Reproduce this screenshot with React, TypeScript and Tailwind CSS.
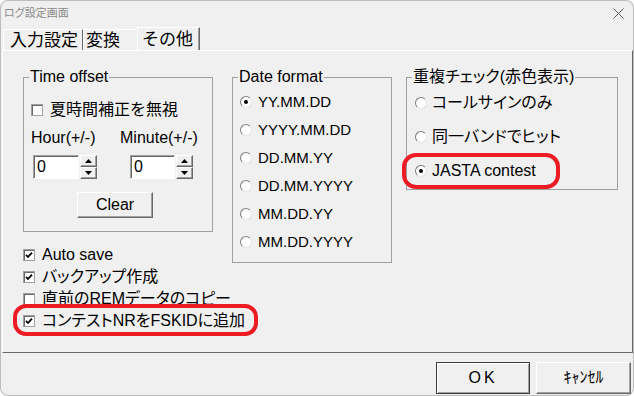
import React from "react";

const raised =
  "border border-white border-r-[#696969] border-b-[#696969] shadow-[inset_-1px_-1px_0_#a0a0a0]";

const CheckBox = ({ checked }: { checked?: boolean }) => (
  <span className="w-[12px] h-[12px] shrink-0 bg-white border border-[#a0a0a0] shadow-[inset_1px_1px_0_#696969] flex items-center justify-center">
    {checked && (
      <svg width="10" height="10" viewBox="0 0 10 10">
        <path d="M2 4.8 L4 7 L8 2.6" fill="none" stroke="#000" strokeWidth="1.8" />
      </svg>
    )}
  </span>
);

const Radio = ({ checked }: { checked?: boolean }) => (
  <span className="w-[12px] h-[12px] shrink-0 rounded-full bg-white border border-t-[#7a7a7a] border-l-[#7a7a7a] border-r-[#e3e3e3] border-b-[#e3e3e3] flex items-center justify-center">
    {checked && <span className="w-[4px] h-[4px] rounded-full bg-black" />}
  </span>
);

const Spinner = ({ editWidth }: { editWidth: string }) => (
  <div className="flex">
    <div
      className={`${editWidth} h-[24px] bg-white border border-t-[#a0a0a0] border-l-[#a0a0a0] border-b-white border-r-white shadow-[inset_1px_1px_0_#696969] pl-[3px] flex items-center leading-none`}
    >
      0
    </div>
    <div className="ml-[1px] flex flex-col w-[17px] h-[24px]">
      <div className={`h-[12px] flex items-center justify-center ${raised}`}>
        <svg width="7" height="4" viewBox="0 0 7 4">
          <path d="M0 4 L3.5 0 L7 4 Z" fill="#000" />
        </svg>
      </div>
      <div className={`h-[12px] flex items-center justify-center ${raised}`}>
        <svg width="7" height="4" viewBox="0 0 7 4">
          <path d="M0 0 L3.5 4 L7 0 Z" fill="#000" />
        </svg>
      </div>
    </div>
  </div>
);

const Legend = ({ children }: { children: React.ReactNode }) => (
  <legend className="ml-[5px] px-[1px] leading-[18px]">{children}</legend>
);

export default function App() {
  const dateFormats = ["YY.MM.DD", "YYYY.MM.DD", "DD.MM.YY", "DD.MM.YYYY", "MM.DD.YY", "MM.DD.YYYY"];
  const dupChecks = ["コールサインのみ", "同一バンドでヒット", "JASTA contest"];
  const options = [
    { label: "Auto save", checked: true },
    { label: "バックアップ作成", checked: true },
    { label: "直前のREMデータのコピー", checked: false },
    { label: "コンテストNRをFSKIDに追加", checked: true },
  ];

  return (
    <div className="w-[634px] h-[396px] bg-[#f0f0f0] rounded-[8px] shadow-[inset_0_0_0_1px_#bdbdbd] overflow-hidden font-['Liberation_Sans','Noto_Sans_CJK_JP',sans-serif] [font-feature-settings:'palt'] text-[16px] text-black">
      {/* title bar */}
      <div className="h-[27px] flex items-center justify-between pl-[4px] pr-[10px]">
        <span className="text-[11px] leading-none text-[#8a8a8a]">ログ設定画面</span>
        <svg width="11" height="11" viewBox="0 0 11 11">
          <path d="M0.5 0.5 L10.5 10.5 M10.5 0.5 L0.5 10.5" stroke="#5c5c5c" strokeWidth="1" />
        </svg>
      </div>

      {/* tabs */}
      <div className="h-[23px] flex items-end pl-[3px] text-[17px] leading-none [font-feature-settings:normal]">
        <div className="w-[80px] h-[21px] border-t border-l border-r border-white border-r-[#696969] flex items-center pl-[6px]">
          入力設定
        </div>
        <div className="w-[53px] h-[21px] border-t border-l border-white flex items-center pl-[2px]">
          変換
        </div>
        <div className="ml-[1px] w-[63px] h-[23px] border-t border-l border-r border-white border-r-[#696969] shadow-[inset_-1px_0_0_#a0a0a0] flex items-center pl-[4px]">
          その他
        </div>
      </div>

      {/* panel */}
      <div className="relative ml-[2px] w-[631px] h-[303px] border border-white border-r-[#696969] border-b-[#696969] pt-[17px] pl-[20px]">
        <div className="flex items-start">
          <div className="flex flex-col w-[190px]">
            <fieldset className="w-[190px] h-[164px] border border-[#a0a0a0]">
              <Legend>Time offset</Legend>
              <div className="mt-[15px] h-[18px] flex items-center gap-[7px] pl-[7px]">
                <CheckBox />
                <span className="[font-feature-settings:normal]">夏時間補正を無視</span>
              </div>
              <div className="mt-[10px] h-[18px] flex items-center pl-[7px]">
                <span className="w-[89px]">Hour(+/-)</span>
                <span>Minute(+/-)</span>
              </div>
              <div className="mt-[8px] flex pl-[9px]">
                <Spinner editWidth="w-[46px]" />
                <div className="ml-[33px]">
                  <Spinner editWidth="w-[45px]" />
                </div>
              </div>
              <div className="mt-[13px] pl-[53px]">
                <div className={`w-[76px] h-[26px] flex items-center justify-center ${raised}`}>Clear</div>
              </div>
            </fieldset>

            <div className="mt-[12px] flex flex-col">
              {options.map((o) => (
                <div key={o.label} className="h-[22px] flex items-center gap-[7px]">
                  <CheckBox checked={o.checked} />
                  <span className="whitespace-nowrap">{o.label}</span>
                </div>
              ))}
            </div>
          </div>

          <fieldset className="ml-[19px] w-[160px] h-[195px] border border-[#a0a0a0]">
            <Legend>Date format</Legend>
            <div className="mt-[7px] pl-[7px] flex flex-col gap-[10px]">
              {dateFormats.map((f, i) => (
                <div key={f} className="h-[18px] flex items-center gap-[6px]">
                  <Radio checked={i === 0} />
                  <span className="text-[15px]">{f}</span>
                </div>
              ))}
            </div>
          </fieldset>

          <fieldset className="ml-[14px] w-[212px] h-[122px] border border-[#a0a0a0]">
            <Legend>重複チェック(赤色表示)</Legend>
            <div className="mt-[8px] pl-[8px] flex flex-col gap-[16px]">
              {dupChecks.map((d, i) => (
                <div key={d} className="h-[18px] flex items-center gap-[5px]">
                  <Radio checked={i === 2} />
                  <span className="whitespace-nowrap">{d}</span>
                </div>
              ))}
            </div>
          </fieldset>
        </div>

        {/* red annotation marks */}
        <div className="absolute left-[399px] top-[102px] w-[158px] h-[36px] rounded-[14px] border-[4px] border-[#ed1c24]" />
        <div className="absolute left-[10px] top-[253px] w-[245px] h-[32px] rounded-[13px] border-[4px] border-[#ed1c24]" />
      </div>

      {/* buttons */}
      <div className="flex justify-end gap-[6px] pt-[9px] pr-[3px]">
        <div className="w-[94px] h-[32px] flex items-center justify-center border border-[#3c3c3c] shadow-[inset_1px_1px_0_#ffffff,inset_-1px_-1px_0_#a0a0a0] tracking-[3px]">
          OK
        </div>
        <div className={`w-[95px] h-[32px] flex items-center justify-center ${raised}`}>ｷｬﾝｾﾙ</div>
      </div>
    </div>
  );
}
